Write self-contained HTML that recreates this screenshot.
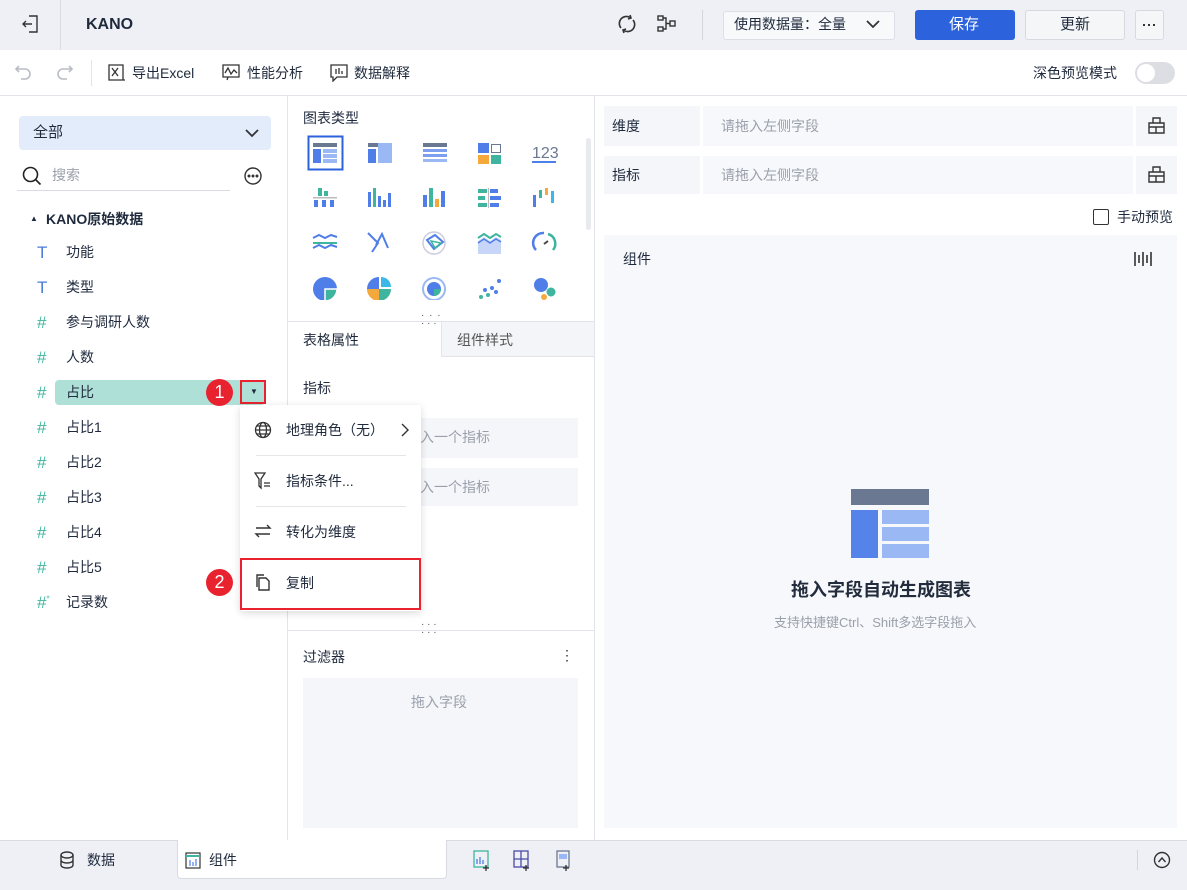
<!DOCTYPE html>
<html><head><meta charset="utf-8">
<style>
*{box-sizing:border-box;margin:0;padding:0}
body{width:1187px;height:890px;position:relative;overflow:hidden;background:#fff;font-family:"Liberation Sans","Noto Sans CJK SC",sans-serif;color:#1f2a3d;font-size:14px}
.a{position:absolute}
.t{position:absolute;white-space:nowrap;line-height:1}
.hash{color:#3fb5a0;font-size:17px;font-weight:normal}
.gray{color:#9aa0ab}
</style></head><body>
<!-- top bar -->
<div class="a" style="left:0;top:0;width:1187px;height:50px;background:#eef0f5"></div>
<div class="a" style="left:60px;top:0;width:1px;height:50px;background:#d9dce3"></div>
<svg class="a" style="left:22px;top:14px" width="18" height="20" viewBox="0 0 18 20" fill="none" stroke="#333" stroke-width="1.4"><path d="M7 2h8v16H7M1 10h9M4 7l-3 3 3 3"/></svg>
<div class="t" style="left:86px;top:17px;font-size:16px;font-weight:bold">KANO</div>
<svg class="a" style="left:617px;top:14px" width="20" height="20" viewBox="0 0 20 20" fill="none" stroke="#333" stroke-width="1.6"><path d="M4 14A7 7 0 0 1 13 3.5M16 6A7 7 0 0 1 7 16.5"/><path d="M13 1l1 3-3 1M7 19l-1-3 3-1"/></svg>
<svg class="a" style="left:657px;top:15px" width="20" height="18" viewBox="0 0 20 18" fill="none" stroke="#333" stroke-width="1.4"><rect x="1" y="1" width="5" height="4"/><rect x="1" y="12" width="5" height="4"/><rect x="13" y="6" width="5" height="5"/><path d="M6 3h3v11H6M9 8.5h4"/></svg>
<div class="a" style="left:702px;top:10px;width:1px;height:30px;background:#d3d6dd"></div>
<div class="a" style="left:723px;top:11px;width:172px;height:29px;background:#f8f9fb;border:1px solid #dcdfe6;border-radius:3px"></div>
<div class="t" style="left:734px;top:17px;font-size:14px">使用数据量：全量</div>
<svg class="a" style="left:865px;top:19px" width="16" height="10" viewBox="0 0 16 10" fill="none" stroke="#333" stroke-width="1.8"><path d="M2 2l6 6 6-6"/></svg>
<div class="a" style="left:915px;top:10px;width:100px;height:30px;background:#2c62dc;border-radius:3px"></div>
<div class="t" style="left:949px;top:17px;color:#fff;font-size:15px">保存</div>
<div class="a" style="left:1025px;top:10px;width:100px;height:30px;background:#f5f6f8;border:1px solid #d6d9df;border-radius:3px"></div>
<div class="t" style="left:1060px;top:17px;font-size:15px">更新</div>
<div class="a" style="left:1135px;top:10px;width:29px;height:30px;border:1px solid #d6d9df;border-radius:3px;background:#f5f6f8"></div>
<div class="a" style="left:1143px;top:24px;width:2px;height:2px;background:#333"></div>
<div class="a" style="left:1148px;top:24px;width:2px;height:2px;background:#333"></div>
<div class="a" style="left:1153px;top:24px;width:2px;height:2px;background:#333"></div>
<!-- toolbar -->
<div class="a" style="left:0;top:95px;width:1187px;height:1px;background:#e2e4e9"></div>
<svg class="a" style="left:15px;top:63px" width="64" height="18" viewBox="0 0 64 18" fill="none" stroke="#b8bcc4" stroke-width="1.6"><path d="M4 3L1 6l3 3M1 6h9a5 5 0 0 1 0 10H6"/><path d="M54 3l3 3-3 3M57 6h-9a5 5 0 0 0 0 10h4"/></svg>
<div class="a" style="left:91px;top:60px;width:1px;height:26px;background:#e2e4e9"></div>
<svg class="a" style="left:108px;top:64px" width="18" height="17" viewBox="0 0 18 17" fill="none" stroke="#333" stroke-width="1.3"><path d="M1 1h14v15H1zM4 4l6 8M10 4l-6 8M15 1v15h2"/></svg>
<div class="t" style="left:132px;top:66px">导出Excel</div>
<svg class="a" style="left:222px;top:64px" width="18" height="17" viewBox="0 0 18 17" fill="none" stroke="#333" stroke-width="1.3"><path d="M1 1h16v12H1zM3 9l3-5 3 6 3-4 3 3M6 13l-1 3"/></svg>
<div class="t" style="left:247px;top:66px">性能分析</div>
<svg class="a" style="left:330px;top:64px" width="18" height="18" viewBox="0 0 18 18" fill="none" stroke="#333" stroke-width="1.3"><path d="M1 1h16v12H7l-4 4v-4H1zM6 5v5M9 4v6M12 7v3"/></svg>
<div class="t" style="left:354px;top:66px">数据解释</div>
<div class="t" style="left:1033px;top:66px">深色预览模式</div>
<div class="a" style="left:1135px;top:62px;width:40px;height:22px;background:#dcdee3;border-radius:11px"></div>
<div class="a" style="left:1137px;top:64px;width:18px;height:18px;background:#fff;border-radius:50%"></div>
<!-- panel borders -->
<div class="a" style="left:287px;top:96px;width:1px;height:744px;background:#e2e4e9"></div>
<div class="a" style="left:594px;top:96px;width:1px;height:744px;background:#e2e4e9"></div>
<!-- left panel -->
<div class="a" style="left:19px;top:116px;width:252px;height:34px;background:#e3ecfb;border-radius:4px"></div>
<div class="t" style="left:33px;top:125px;font-size:15px">全部</div>
<svg class="a" style="left:244px;top:128px" width="16" height="10" viewBox="0 0 16 10" fill="none" stroke="#333" stroke-width="1.8"><path d="M2 2l6 6 6-6"/></svg>
<svg class="a" style="left:22px;top:166px" width="20" height="20" viewBox="0 0 20 20" fill="none" stroke="#222" stroke-width="1.6"><circle cx="8.5" cy="8.5" r="7"/><path d="M13.5 13.5l5 5"/></svg>
<div class="t gray" style="left:52px;top:168px">搜索</div>
<div class="a" style="left:17px;top:190px;width:213px;height:1px;background:#d8dbe1"></div>
<svg class="a" style="left:243px;top:166px" width="20" height="20" viewBox="0 0 20 20" fill="none" stroke="#333" stroke-width="1.4"><circle cx="10" cy="10" r="8"/><circle cx="6" cy="10" r=".8" fill="#333"/><circle cx="10" cy="10" r=".8" fill="#333"/><circle cx="14" cy="10" r=".8" fill="#333"/></svg>
<div class="t" style="left:30px;top:215px;font-size:8px">▲</div>
<div class="t" style="left:46px;top:212px;font-weight:bold;font-size:14px">KANO原始数据</div>
<div class="t" style="left:37px;top:244px;color:#4a7bd8;font-size:17px">T</div><div class="t" style="left:66px;top:245px">功能</div>
<div class="t" style="left:37px;top:279px;color:#4a7bd8;font-size:17px">T</div><div class="t" style="left:66px;top:280px">类型</div>
<div class="t hash" style="left:37px;top:314px">#</div><div class="t" style="left:66px;top:315px">参与调研人数</div>
<div class="t hash" style="left:37px;top:349px">#</div><div class="t" style="left:66px;top:350px">人数</div>
<div class="a" style="left:55px;top:380px;width:210px;height:25px;background:#afe0d7;border-radius:4px"></div>
<div class="t hash" style="left:37px;top:384px">#</div><div class="t" style="left:66px;top:385px">占比</div>
<div class="a" style="left:240px;top:380px;width:26px;height:24px;border:2px solid #e8232f"></div>
<div class="t" style="left:250px;top:388px;font-size:8px">▼</div>
<div class="a" style="left:206px;top:379px;width:27px;height:27px;background:#e8232f;border-radius:50%;color:#fff;font-size:18px;line-height:27px;text-align:center">1</div>
<div class="t hash" style="left:37px;top:419px">#</div><div class="t" style="left:66px;top:420px">占比1</div>
<div class="t hash" style="left:37px;top:454px">#</div><div class="t" style="left:66px;top:455px">占比2</div>
<div class="t hash" style="left:37px;top:489px">#</div><div class="t" style="left:66px;top:490px">占比3</div>
<div class="t hash" style="left:37px;top:524px">#</div><div class="t" style="left:66px;top:525px">占比4</div>
<div class="t hash" style="left:37px;top:559px">#</div><div class="t" style="left:66px;top:560px">占比5</div>
<div class="t hash" style="left:37px;top:594px">#<sup style="font-size:8px">*</sup></div><div class="t" style="left:66px;top:595px">记录数</div>
<!-- middle panel -->
<div class="t" style="left:303px;top:111px">图表类型</div>
<div class="a" style="left:586px;top:138px;width:5px;height:92px;background:#e8eaee;border-radius:3px"></div>
<svg class="a" style="left:300px;top:130px" width="270" height="170" viewBox="300 130 270 170">
<rect x="308.5" y="136.5" width="34" height="33" fill="none" stroke="#2c62dc" stroke-width="2"/>
<rect x="313" y="143" width="24" height="4" fill="#6b7891"/><rect x="313" y="149" width="8" height="14" fill="#4f7ee8"/><rect x="323" y="149" width="14" height="4" fill="#9ab8f4"/><rect x="323" y="154" width="14" height="4" fill="#9ab8f4"/><rect x="323" y="159" width="14" height="4" fill="#9ab8f4"/>
<rect x="368" y="143" width="24" height="4" fill="#6b7891"/><rect x="368" y="149" width="8" height="14" fill="#4f7ee8"/><rect x="378" y="143" width="14" height="20" fill="#9ab8f4"/>
<rect x="423" y="143" width="24" height="4" fill="#6b7891"/><rect x="423" y="149" width="24" height="3" fill="#7c9ff0"/><rect x="423" y="154" width="24" height="3" fill="#7c9ff0"/><rect x="423" y="159" width="24" height="3" fill="#9ab8f4"/>
<rect x="478" y="143" width="11" height="10" fill="#4f7ee8"/><rect x="491.5" y="144.5" width="9" height="8" fill="none" stroke="#6b7891"/><rect x="478" y="155" width="11" height="9" fill="#f5a83b"/><rect x="491" y="155" width="10" height="9" fill="#3fb5a0"/>
<text x="532" y="158" font-size="16" fill="#6b7891" font-family="Liberation Sans">123</text><rect x="532" y="161" width="24" height="2" fill="#4f7ee8"/>
<rect x="313" y="197" width="24" height="1.5" fill="#bbb"/><rect x="318" y="188" width="4" height="8" fill="#3fb5a0"/><rect x="324" y="191" width="4" height="5" fill="#3fb5a0"/><rect x="314" y="200" width="4" height="7" fill="#4f7ee8"/><rect x="322" y="200" width="4" height="7" fill="#4f7ee8"/><rect x="330" y="200" width="4" height="7" fill="#4f7ee8"/>
<rect x="368" y="192" width="3" height="15" fill="#4f7ee8"/><rect x="373" y="188" width="3" height="19" fill="#3fb5a0"/><rect x="378" y="196" width="3" height="11" fill="#4f7ee8"/><rect x="383" y="200" width="3" height="7" fill="#4f7ee8"/><rect x="388" y="193" width="3" height="14" fill="#4f7ee8"/>
<rect x="423" y="195" width="4" height="12" fill="#4f7ee8"/><rect x="429" y="188" width="4" height="19" fill="#3fb5a0"/><rect x="435" y="199" width="4" height="8" fill="#f5a83b"/><rect x="441" y="191" width="4" height="16" fill="#4f7ee8"/>
<rect x="478" y="189" width="9" height="4" fill="#3fb5a0"/><rect x="490" y="189" width="8" height="4" fill="#4f7ee8"/><rect x="478" y="196" width="7" height="4" fill="#3fb5a0"/><rect x="490" y="196" width="11" height="4" fill="#4f7ee8"/><rect x="478" y="203" width="9" height="4" fill="#3fb5a0"/><rect x="490" y="203" width="9" height="4" fill="#4f7ee8"/><rect x="488" y="188" width="1" height="20" fill="#bbb"/>
<rect x="533" y="195" width="3" height="12" fill="#4f7ee8"/><rect x="539" y="190" width="3" height="8" fill="#3fb5a0"/><rect x="545" y="188" width="3" height="7" fill="#f5a83b"/><rect x="551" y="191" width="3" height="12" fill="#3bb8e8"/>
<path d="M313 238l6-3 6 3 6-3 6 2M313 248l6-3 6 3 6-3 6 2" fill="none" stroke="#4f7ee8" stroke-width="2"/><path d="M313 243h24" stroke="#3fb5a0" stroke-width="2"/>
<path d="M368 233l10 10-6 9M376 245l6-11 6 14" fill="none" stroke="#4f7ee8" stroke-width="2"/>
<circle cx="434" cy="243" r="11" fill="none" stroke="#ccd" stroke-width="1.5"/><path d="M427 240l8-5 8 7-9 7z" fill="none" stroke="#4f7ee8" stroke-width="2"/><path d="M431 241l10 2-6 5z" fill="none" stroke="#3fb5a0" stroke-width="1.5"/>
<path d="M478 241l6-4 6 4 6-4 5 3v14h-23z" fill="#c7d6f8"/><path d="M478 238l6-4 6 4 6-4 5 3" fill="none" stroke="#3fb5a0" stroke-width="2"/><path d="M478 243l6-4 6 4 6-4 5 3" fill="none" stroke="#4f7ee8" stroke-width="1.5"/>
<path d="M536 250a10 10 0 0 1 8-17" fill="none" stroke="#4f7ee8" stroke-width="2.5"/><path d="M548 234a10 10 0 0 1 5 16" fill="none" stroke="#3fb5a0" stroke-width="2.5"/><path d="M544 244l4-3" stroke="#444" stroke-width="2"/>
<circle cx="325" cy="289" r="12" fill="#4f7ee8"/><path d="M325 289h12a12 12 0 0 1-12 12z" fill="#3fb5a0" stroke="#fff" stroke-width="1.5"/>
<path d="M379 289v-12a12 12 0 0 0-12 12z" fill="#4f7ee8"/><path d="M381 287v-10a10 10 0 0 1 10 10z" fill="#3bb8e8"/><path d="M379 289h-12a12 12 0 0 0 12 12z" fill="#f5a83b"/><path d="M379 289h12a12 12 0 0 1-12 12z" fill="#3fb5a0"/>
<circle cx="434" cy="289" r="11" fill="none" stroke="#9ab8f4" stroke-width="2"/><circle cx="434" cy="289" r="7" fill="#4f7ee8"/><path d="M434 289h7a7 7 0 0 1-7 7z" fill="#3fb5a0"/>
<circle cx="481" cy="297" r="2" fill="#3fb5a0"/><circle cx="485" cy="290" r="2" fill="#4f7ee8"/><circle cx="488" cy="295" r="2" fill="#3fb5a0"/><circle cx="492" cy="288" r="2" fill="#4f7ee8"/><circle cx="496" cy="292" r="2" fill="#4f7ee8"/><circle cx="499" cy="281" r="2" fill="#4f7ee8"/>
<circle cx="541" cy="285" r="7" fill="#4f7ee8"/><circle cx="551" cy="292" r="4.5" fill="#3fb5a0"/><circle cx="544" cy="297" r="3" fill="#f5a83b"/>
</svg>
<div class="t" style="left:421px;top:311px;font-size:10px;color:#555;letter-spacing:1px">· · ·</div>
<div class="t" style="left:421px;top:319px;font-size:10px;color:#555">· · ·</div>
<div class="a" style="left:288px;top:321px;width:306px;height:1px;background:#e2e4e9"></div>
<div class="a" style="left:441px;top:322px;width:153px;height:35px;background:#f4f5f8;border-left:1px solid #e2e4e9;border-bottom:1px solid #e2e4e9"></div>
<div class="t" style="left:303px;top:333px">表格属性</div>
<div class="t" style="left:457px;top:333px;color:#555">组件样式</div>
<div class="t" style="left:303px;top:381px">指标</div>
<div class="a" style="left:303px;top:418px;width:275px;height:40px;background:#f5f6fa"></div>
<div class="a" style="left:303px;top:468px;width:275px;height:38px;background:#f5f6fa"></div>
<div class="t gray" style="left:420px;top:430px">入一个指标</div>
<div class="t gray" style="left:420px;top:480px">入一个指标</div>
<div class="a" style="left:288px;top:630px;width:306px;height:1px;background:#e2e4e9"></div>
<div class="t" style="left:421px;top:620px;font-size:10px;color:#555">· · ·</div>
<div class="t" style="left:421px;top:628px;font-size:10px;color:#555">· · ·</div>
<div class="t" style="left:303px;top:650px">过滤器</div>
<div class="t" style="left:560px;top:648px;font-size:14px;color:#333">⋮</div>
<div class="a" style="left:303px;top:678px;width:275px;height:150px;background:#f5f6fa"></div>
<div class="t gray" style="left:411px;top:695px">拖入字段</div>
<!-- context menu -->
<div class="a" style="left:240px;top:405px;width:181px;height:206px;background:#fff;border-radius:3px;box-shadow:0 2px 8px rgba(0,0,0,.15)"></div>
<svg class="a" style="left:254px;top:421px" width="18" height="18" viewBox="0 0 18 18" fill="none" stroke="#333" stroke-width="1.3"><circle cx="9" cy="9" r="7.5"/><ellipse cx="9" cy="9" rx="3.5" ry="7.5"/><path d="M1.5 9h15M3 5h12M3 13h12"/></svg>
<div class="t" style="left:286px;top:423px">地理角色（无）</div>
<svg class="a" style="left:400px;top:422px" width="10" height="16" viewBox="0 0 10 16" fill="none" stroke="#333" stroke-width="1.4"><path d="M2 2l6 6-6 6"/></svg>
<div class="a" style="left:256px;top:455px;width:150px;height:1px;background:#e4e6ea"></div>
<svg class="a" style="left:254px;top:472px" width="18" height="18" viewBox="0 0 18 18" fill="none" stroke="#333" stroke-width="1.3"><path d="M1 1h10L7 7v9L5 14V7zM10 11h6M10 14h6"/></svg>
<div class="t" style="left:286px;top:474px">指标条件...</div>
<div class="a" style="left:256px;top:506px;width:150px;height:1px;background:#e4e6ea"></div>
<svg class="a" style="left:254px;top:523px" width="18" height="16" viewBox="0 0 18 16" fill="none" stroke="#333" stroke-width="1.4"><path d="M2 5h14l-3-3M16 11H2l3 3"/></svg>
<div class="t" style="left:286px;top:525px">转化为维度</div>
<div class="a" style="left:240px;top:558px;width:181px;height:52px;border:2px solid #e8232f"></div>
<svg class="a" style="left:255px;top:574px" width="16" height="17" viewBox="0 0 16 17" fill="none" stroke="#333" stroke-width="1.4"><path d="M4 4h7l3 3v9H4zM2 13V1h7"/></svg>
<div class="t" style="left:286px;top:576px">复制</div>
<div class="a" style="left:206px;top:569px;width:27px;height:27px;background:#e8232f;border-radius:50%;color:#fff;font-size:18px;line-height:27px;text-align:center">2</div>
<!-- right panel -->
<div class="a" style="left:604px;top:106px;width:96px;height:40px;background:#f5f6fa"></div>
<div class="a" style="left:703px;top:106px;width:430px;height:40px;background:#f7f8fb"></div>
<div class="a" style="left:1136px;top:106px;width:41px;height:40px;background:#f5f6fa"></div>
<div class="t" style="left:612px;top:119px">维度</div>
<div class="t gray" style="left:721px;top:119px">请拖入左侧字段</div>
<div class="a" style="left:604px;top:156px;width:96px;height:38px;background:#f5f6fa"></div>
<div class="a" style="left:703px;top:156px;width:430px;height:38px;background:#f7f8fb"></div>
<div class="a" style="left:1136px;top:156px;width:41px;height:38px;background:#f5f6fa"></div>
<div class="t" style="left:612px;top:168px">指标</div>
<div class="t gray" style="left:721px;top:168px">请拖入左侧字段</div>
<svg class="a" style="left:1148px;top:117px" width="17" height="17" viewBox="0 0 17 17" fill="none" stroke="#333" stroke-width="1.4"><path d="M1 6h15v10H1zM5 6V1h7v5M1 10h15M8 10v6"/></svg>
<svg class="a" style="left:1148px;top:166px" width="17" height="17" viewBox="0 0 17 17" fill="none" stroke="#333" stroke-width="1.4"><path d="M1 6h15v10H1zM5 6V1h7v5M1 10h15M8 10v6"/></svg>
<div class="a" style="left:1093px;top:209px;width:16px;height:16px;border:1.5px solid #333;border-radius:2px"></div>
<div class="t" style="left:1117px;top:210px">手动预览</div>
<div class="a" style="left:604px;top:235px;width:573px;height:593px;background:#f7f8fb"></div>
<div class="t" style="left:623px;top:252px">组件</div>
<svg class="a" style="left:1134px;top:250px" width="18" height="18" viewBox="0 0 18 18" fill="none" stroke="#333" stroke-width="1.6"><path d="M1 2v14M5 5v8M9 2v14M13 5v8M17 2v14"/></svg>
<div class="a" style="left:851px;top:489px;width:78px;height:16px;background:#6b7891"></div>
<div class="a" style="left:851px;top:510px;width:27px;height:48px;background:#5583e9"></div>
<div class="a" style="left:882px;top:510px;width:47px;height:14px;background:#9ab8f4"></div>
<div class="a" style="left:882px;top:527px;width:47px;height:14px;background:#9ab8f4"></div>
<div class="a" style="left:882px;top:544px;width:47px;height:14px;background:#9ab8f4"></div>
<div class="t" style="left:791px;top:581px;font-size:18px;font-weight:bold;color:#222c3c">拖入字段自动生成图表</div>
<div class="t gray" style="left:774px;top:616px;font-size:13px">支持快捷键Ctrl、Shift多选字段拖入</div>
<!-- bottom bar -->
<div class="a" style="left:0;top:840px;width:1187px;height:50px;background:#eef0f5;border-top:1px solid #d8dbe1"></div>
<div class="a" style="left:177px;top:840px;width:270px;height:39px;background:#fff;border-radius:0 0 4px 4px;border:1px solid #d8dbe1;border-top:none"></div>
<svg class="a" style="left:59px;top:851px" width="16" height="18" viewBox="0 0 16 18" fill="none" stroke="#333" stroke-width="1.4"><ellipse cx="8" cy="4" rx="6" ry="3"/><path d="M2 4v10c0 4 12 4 12 0V4M2 9c0 4 12 4 12 0"/></svg>
<div class="t" style="left:87px;top:853px">数据</div>
<svg class="a" style="left:185px;top:852px" width="16" height="17" viewBox="0 0 16 17" fill="none" stroke="#333" stroke-width="1.2"><rect x="1" y="1" width="14" height="15"/><path d="M1 4h14" stroke="#3fb5a0" stroke-width="2"/><path d="M5 14V8M8 14V10M11 14V7" stroke="#4f7ee8"/></svg>
<div class="t" style="left:209px;top:853px">组件</div>
<svg class="a" style="left:473px;top:850px" width="100" height="22" viewBox="0 0 100 22" fill="none" stroke-width="1.3"><rect x="1" y="1" width="14" height="16" stroke="#3fb5a0"/><path d="M4 14V9M7 14V7M10 14v-4" stroke="#4f7ee8"/><path d="M13 15v6M10 18h6" stroke="#333"/><rect x="41" y="1" width="14" height="16" stroke="#4a4aa8"/><path d="M41 9h14M48 1v16" stroke="#4a4aa8"/><path d="M53 15v6M50 18h6" stroke="#333"/><rect x="84" y="1" width="12" height="16" stroke="#6b7891"/><rect x="86" y="4" width="8" height="5" fill="#9ab8f4" stroke="none"/><path d="M93 15v6M90 18h6" stroke="#333"/></svg>
<div class="a" style="left:1137px;top:850px;width:1px;height:20px;background:#d3d6dd"></div>
<svg class="a" style="left:1153px;top:851px" width="18" height="18" viewBox="0 0 18 18" fill="none" stroke="#333" stroke-width="1.4"><circle cx="9" cy="9" r="7.5"/><path d="M5.5 11L9 7l3.5 4"/></svg>
</body></html>
